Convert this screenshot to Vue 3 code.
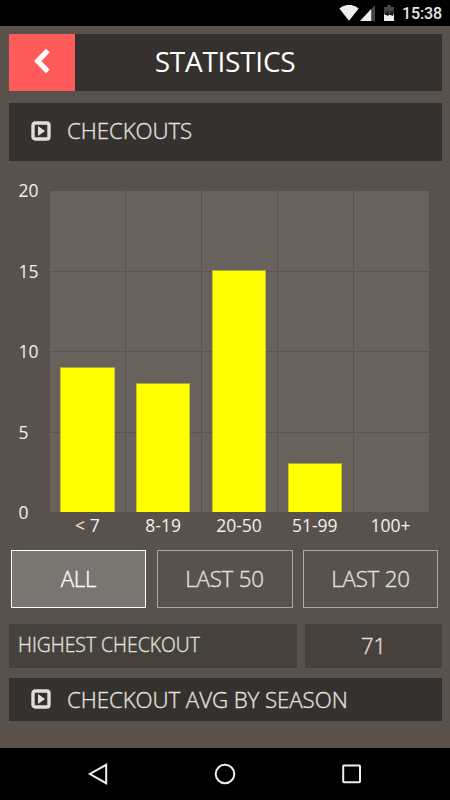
<script setup>
const ticks = [20, 15, 10, 5, 0]
const bars = [
  { label: '< 7', value: 9 },
  { label: '8-19', value: 8 },
  { label: '20-50', value: 15 },
  { label: '51-99', value: 3 },
  { label: '100+', value: 0 },
]
const filters = ['ALL', 'LAST 50', 'LAST 20']
</script>

<template>
  <div class="screen">
    <div class="status">
      <svg class="wifi" width="20" height="16" viewBox="0 0 20 16"><path d="M.3 3.4Q10-3.8 19.7 3.4L10 15.7Z" fill="#eee" /></svg>
      <svg class="signal" width="15" height="16" viewBox="0 0 15 16"><path d="M15 0V16H0Z" fill="#444" /><path d="M11.2 4V16H0Z" fill="#eee" /></svg>
      <svg class="battery" width="10" height="16" viewBox="0 0 10 16"><path d="M0 2H3V0H7V2H10V10H0Z" fill="#444" /><path d="M0 9H10V16H0Z" fill="#eee" /><text x="5" y="10.8" text-anchor="middle" class="level">44</text></svg>
      <span class="clock">15:38</span>
    </div>

    <main class="content">
      <header class="header">
        <button class="back" aria-label="Back">
          <svg width="18" height="26" viewBox="0 0 18 26"><path d="M14.8 2.5L4.8 13L14.8 23.5" fill="none" stroke="#fff" stroke-width="5.4" /></svg>
        </button>
        <h1 class="title">STATISTICS</h1>
      </header>

      <section class="panel panel-top">
        <svg class="play" width="20" height="20" viewBox="0 0 20 20"><rect x="2" y="2" width="16" height="16" rx="2.2" fill="none" stroke="#dfdfdd" stroke-width="3.4" /><path d="M7 5L14 10L7 15Z" fill="#dfdfdd" /></svg>
        <span class="panel-text">CHECKOUTS</span>
      </section>

      <section class="chart">
        <div class="axis"><span v-for="t in ticks" :key="t">{{ t }}</span></div>
        <div class="plot-area">
          <div class="plot">
            <div v-for="b in bars" :key="b.label" class="column">
              <div class="cell" /><div class="cell" /><div class="cell" /><div class="cell" />
              <div v-if="b.value" class="bar" :style="{ height: b.value * 5 + '%' }" />
            </div>
          </div>
          <div class="labels"><span v-for="b in bars" :key="b.label">{{ b.label }}</span></div>
        </div>
      </section>

      <div class="filters">
        <button v-for="(f, i) in filters" :key="f" class="filter" :class="{ active: i === 0 }">{{ f }}</button>
      </div>

      <div class="stat">
        <div class="stat-name"><span>HIGHEST CHECKOUT</span></div>
        <div class="stat-value">71</div>
      </div>

      <section class="panel panel-bottom">
        <svg class="play" width="20" height="20" viewBox="0 0 20 20"><rect x="2" y="2" width="16" height="16" rx="2.2" fill="none" stroke="#dfdfdd" stroke-width="3.4" /><path d="M7 5L14 10L7 15Z" fill="#dfdfdd" /></svg>
        <span class="panel-text season">CHECKOUT AVG BY SEASON</span>
      </section>
    </main>

    <nav class="nav">
      <svg width="22" height="22" viewBox="0 0 22 22"><path d="M19.2 1.8V20.2L2.9 11Z" /></svg>
      <svg width="22" height="22" viewBox="0 0 22 22"><circle cx="11" cy="11" r="9.3" /></svg>
      <svg width="22" height="22" viewBox="0 0 22 22"><rect x="2.2" y="2.6" width="16.8" height="16.6" rx=".6" /></svg>
    </nav>
  </div>
</template>

<style>
body { background: #59514c; }
</style>

<style scoped>
* { box-sizing: border-box; }
button { font: inherit; color: inherit; border: 0; padding: 0; border-radius: 0; }
.screen { width: 450px; height: 800px; display: flex; flex-direction: column; background: #59514c; font-family: "Open Sans", sans-serif; color: #e1e0df; overflow: hidden; white-space: nowrap; }
.status { height: 26px; flex: none; background: #000; display: flex; padding: 5px 10px 0 0; justify-content: flex-end; }
.signal { margin-left: 1px; }
.battery { margin-left: 9px; }
.level { font: bold 8px Roboto, sans-serif; fill: #111; }
.clock { width: 38px; margin-left: 8px; margin-top: -2px; font: 500 16px/22px Roboto, sans-serif; color: #e6e6e6; letter-spacing: -.15px; }
.content { flex: 1; padding: 8px 8px 0 9px; }
.header { height: 57px; display: flex; align-items: stretch; background: #35312e; }
.back { width: 65.5px; background: #ff5b5b; display: flex; align-items: center; justify-content: center; padding-bottom: 3px; }
.title { margin: 0 0 0 80.3px; font-weight: 400; font-size: 28px; line-height: 55px; color: #fff; letter-spacing: -.28px; }
.panel { display: flex; align-items: center; background: #35312e; padding-left: 22px; }
.panel-top { height: 58px; margin-top: 12px; padding-bottom: 2px; }
.panel-text, .filter, .stat { font-weight: 300; -webkit-text-stroke: .35px currentColor; }
.panel-text { margin-left: 16px; font-size: 22.3px; line-height: 30px; letter-spacing: -.08px; }
.season { padding-top: 1px; }
.chart { margin-top: 30px; height: 347px; display: flex; }
.axis { width: 41px; height: 343px; margin-top: -11px; display: flex; flex-direction: column; justify-content: space-between; padding-left: 9.6px; font-size: 17.5px; line-height: 21px; color: #f2f1f0; }
.plot-area { width: 379px; }
.plot { height: 321px; display: grid; grid-template-columns: 76px 76px 76px 76px 75px; background: #67625c; }
.column { position: relative; display: grid; grid-template-rows: 81px 80px 81px 79px; border-right: 1px solid #59544e; }
.column:last-child { border: 0; }
.cell { border-bottom: 1px solid #59544e; }
.cell:nth-child(4) { border: 0; }
.bar { position: absolute; left: 10px; bottom: 0; box-sizing: content-box; width: 52px; background: #ff0; border: 1px solid #c5c22d; border-top-color: #aaa73a; border-bottom: 0; }
.column:first-child .bar { width: 53px; }
.labels { display: grid; grid-template-columns: repeat(5, 1fr); padding-top: 1px; margin-left: -.5px; margin-right: .5px; text-align: center; font-size: 17.5px; line-height: 25px; color: #f2f1f0; }
.filters { display: grid; grid-template-columns: 135px 136px 135px; column-gap: 10.5px; margin: 12px 0 0 2px; }
.filter { height: 58px; border: 1px solid #aaa6a3; background: transparent; font-size: 22.3px; line-height: 54px; padding-bottom: 1px; letter-spacing: -.2px; }
.active { background: #797570; border-color: #fff; color: #fff; }
.stat { margin-top: 16px; display: grid; grid-template-columns: 287.5px 1fr; column-gap: 8.5px; height: 44px; }
.stat-name, .stat-value { background: #46413c; line-height: 42px; }
.stat-name { padding-left: 9px; font-size: 19.35px; }
.stat-value { text-align: center; font-size: 22px; line-height: 43px; }
.panel-bottom { height: 42.5px; margin-top: 10px; }
.nav { height: 52.5px; flex: none; background: #000; display: flex; justify-content: center; gap: 105px; align-items: center; }
.nav svg { fill: none; stroke: #eee; stroke-width: 2; }
</style>
